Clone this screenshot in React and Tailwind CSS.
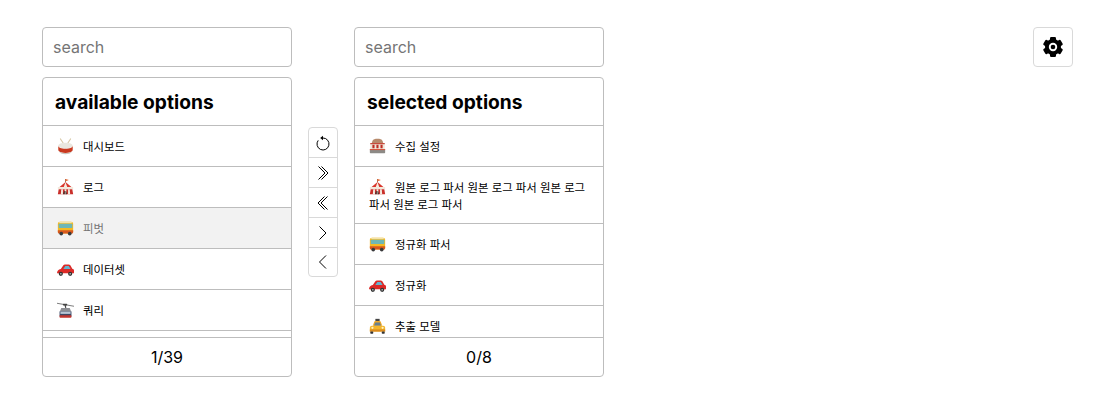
const Drum = () => (
  <>
    <path d="M4 1l4 6M16 1l-4 6" stroke="#d8c9a8" strokeWidth="1.2" strokeLinecap="round" />
    <ellipse cx="10" cy="9" rx="8.500" ry="3.500" fill="#e9e7df" />
    <path d="M1.500 9c0 2 3.500 3.500 8.500 3.500S18.500 11 18.500 9v4.500c0 .8-.2 1.400-.8 2-1.400 1.400-4.200 2-7.700 2s-6.300-.6-7.700-2c-.6-.6-.8-1.200-.8-2z" fill="#c9391f" />
    <path d="M2.500 15.500c1.500 1.400 4 2.200 7.500 2.200s6-.8 7.500-2.200c-.5 2-3.500 3.500-7.500 3.500s-7-1.500-7.500-3.500z" fill="#c9c5bd" />
  </>
);

const Tent = () => (
  <>
    <path d="M10 0v4" stroke="#8a5a3a" strokeWidth="1" />
    <path d="M10 0l4 1.300-4 1.300z" fill="#e8632c" />
    <path d="M10 3.500L3 9.500h14z" fill="#d9362b" />
    <path d="M10 3.500L8 9.500h4z" fill="#f4ece0" />
    <rect x="1" y="9.500" width="18" height="2.500" fill="#f2e7da" />
    <path d="M2 12h16l1 6H1z" fill="#c92f2a" />
    <path d="M5 12h2v6H4.500zM13 12h2l.5 6H13zM9 12h2v6H9z" fill="#f4ece0" />
    <path d="M7.300 18l1-4h.7v4zM11.700 18l-1-4H10v4z" fill="#2b2220" />
  </>
);

const Bus = () => (
  <>
    <rect x="1" y="2" width="18" height="14" rx="2.500" fill="#f5b921" />
    <rect x="2.500" y="2" width="15" height="1.800" rx=".8" fill="#f4e3a8" />
    <rect x="2" y="4.300" width="16" height="5" rx=".6" fill="#6fb7b5" />
    <path d="M1 12h18v2.300c0 1-.7 1.700-1.700 1.700H2.700c-1 0-1.700-.7-1.700-1.700z" fill="#d8581f" />
    <circle cx="5" cy="16" r="2.200" fill="#3a3a3c" />
    <circle cx="15" cy="16" r="2.200" fill="#3a3a3c" />
  </>
);

const Car = () => (
  <>
    <path d="M0 14.500c0-3 1.500-4.500 4.500-5.200l3-4.300c.5-.6 1-.9 1.800-.9h4.400c.9 0 1.500.4 2 1l2.300 3.900c1.500.5 2.500 1.500 2.500 3v2.500z" fill="#dc2a27" />
    <path d="M7.500 9.500l2.300-3.700h4l2.200 3.700z" fill="#63b4cf" />
    <circle cx="4.500" cy="15" r="2.500" fill="#333" />
    <circle cx="15.500" cy="15" r="2.500" fill="#333" />
    <circle cx="4.500" cy="15" r="1" fill="#bbb" />
    <circle cx="15.500" cy="15" r="1" fill="#bbb" />
  </>
);

const Tram = () => (
  <>
    <path d="M0 1.500L20 5" stroke="#555" strokeWidth=".9" />
    <path d="M9.500 3l.8 4" stroke="#444" strokeWidth="1.500" />
    <rect x="7" y="2" width="5" height="2" rx=".5" fill="#444" />
    <path d="M5 7h10l1.500 4H3.500z" fill="#8b8d92" />
    <rect x="3" y="11" width="14" height="6" fill="#3c4a66" />
    <rect x="4" y="11.500" width="12" height="2.500" fill="#b8c6d4" />
    <rect x="3" y="15.500" width="14" height="3" rx=".8" fill="#c1362f" />
  </>
);

const Slot = () => (
  <>
    <path d="M4 3.500C5 1.500 7 1 10 1s5 .5 6 2.500l.7 2.500H3.300z" fill="#b78a6c" />
    <rect x="1.500" y="6" width="17" height="7" fill="#efe6d8" />
    <rect x="1.500" y="6" width="17" height="1.300" fill="#c23a2c" />
    <path d="M4 8h2.500v4H4zM8.700 8h2.500v4H8.700zM13.500 8H16v4h-2.500z" fill="#bd2f26" />
    <rect x="1" y="13" width="18" height="5" rx=".8" fill="#8d8a86" />
    <rect x="1" y="13" width="18" height="1.200" fill="#d8523a" />
  </>
);

const Taxi = () => (
  <>
    <rect x="7.500" y="1" width="5" height="2.500" fill="#444" />
    <path d="M4.500 9l1.500-4.200c.2-.7.800-1.200 1.600-1.200h4.800c.8 0 1.400.5 1.600 1.200L15.500 9z" fill="#f1a826" />
    <path d="M6 9l1.200-3.800h5.600L14 9z" fill="#68808f" />
    <path d="M1 11.500C1 10 2 9 3.500 9h13c1.500 0 2.500 1 2.500 2.500V16H1z" fill="#f3b52c" />
    <rect x="1" y="13.500" width="18" height="2.500" fill="#d98a1e" />
    <rect x="1.500" y="16" width="3.500" height="2.500" rx=".8" fill="#333" />
    <rect x="15" y="16" width="3.500" height="2.500" rx=".8" fill="#333" />
    <circle cx="4" cy="11.500" r="1.300" fill="#fff3c4" />
    <circle cx="16" cy="11.500" r="1.300" fill="#fff3c4" />
  </>
);

const available = [
  { icon: Drum, label: "대시보드" },
  { icon: Tent, label: "로그" },
  { icon: Bus, label: "피벗", active: true },
  { icon: Car, label: "데이터셋" },
  { icon: Tram, label: "쿼리" },
];

const selected = [
  { icon: Slot, label: "수집 설정" },
  { icon: Tent, label: "원본 로그 파서 원본 로그 파서 원본 로그 파서 원본 로그 파서" },
  { icon: Bus, label: "정규화 파서" },
  { icon: Car, label: "정규화" },
  { icon: Taxi, label: "추출 모델" },
];

function Row({ item }) {
  const Icon = item.icon;
  return (
    <li className={`border-b border-[#bdbdbd] px-[14px] py-[10px] text-[11.4px] leading-[16px] ${item.active ? "bg-[#f2f2f2] text-[#757575]" : "text-black"}`}>
      <span className="mr-[10px] inline-flex h-[20px] w-[16px] items-center justify-center align-[-4px]">
        <svg viewBox="0 0 20 20" className="h-[17px] w-[17px] shrink-0">
          <Icon />
        </svg>
      </span>
      {item.label}
    </li>
  );
}

function Column({ title, items, count }) {
  return (
    <div className="flex w-[250px] flex-col gap-[10px]">
      <input
        type="text"
        placeholder="search"
        className="h-[40px] rounded border border-[#bdbdbd] px-[10px] text-[16px] outline-none placeholder:text-[#757575]"
      />
      <div className="flex h-[300px] flex-col rounded border border-[#bdbdbd]">
        <h2 className="h-[48px] shrink-0 border-b border-[#bdbdbd] px-[12px] text-[19.2px] leading-[48px] font-bold">{title}</h2>
        <ul className="min-h-0 flex-1 overflow-hidden">
          {items.map((item) => (
            <Row key={item.label} item={item} />
          ))}
        </ul>
        <div className="h-[39px] shrink-0 border-t border-[#bdbdbd] text-center text-[16px] leading-[38px]">{count}</div>
      </div>
    </div>
  );
}

const transferPaths = [
  ["M10 5a6 6 0 1 1-4.800 2.400"],
  ["M5.500 3.500L12 10l-6.500 6.500", "M8.500 3.500L15 10l-6.500 6.500"],
  ["M11.500 3.500L5 10l6.500 6.500", "M14.500 3.500L8 10l6.500 6.500"],
  ["M6.500 3.500L13 10l-6.500 6.500"],
  ["M13 3.500L6.500 10l6.500 6.500"],
];

export default function App() {
  return (
    <div className="flex h-[418px] items-start bg-white pt-[27px] pr-[36px] pl-[42px] font-['Inter','Noto_Sans_CJK_KR',sans-serif] text-black">
      <Column title="available options" items={available} count="1/39" />
      <div className="mx-[16px] mt-[100px] flex h-[150px] w-[30px] flex-col overflow-hidden rounded border border-[#d9d9d9]">
        {transferPaths.map((paths, i) => (
          <button key={i} className="flex h-[30px] shrink-0 items-center justify-center border-b border-[#d9d9d9] last:h-[28px] last:border-b-0">
            <svg viewBox="0 0 20 20" className="h-[20px] w-[20px]" fill="none" stroke="black" strokeWidth="1">
              {paths.map((d) => (
                <path key={d} d={d} />
              ))}
              {i === 0 && <path d="M10 2.800L7.200 5 10 7.200z" fill="black" stroke="none" />}
            </svg>
          </button>
        ))}
      </div>
      <Column title="selected options" items={selected} count="0/8" />
      <button className="ml-auto flex h-[40px] w-[40px] items-center justify-center rounded border border-[#d9d9d9]">
        <svg viewBox="0 0 24 24" className="h-[24px] w-[24px]">
          <circle cx="12" cy="12" r="8" fill="black" />
          {[0, 60, 120, 180, 240, 300].map((deg) => (
            <rect key={deg} x="9" y="2" width="6" height="6" rx="1.200" fill="black" transform={`rotate(${deg} 12 12)`} />
          ))}
          <circle cx="12" cy="12" r="4.200" fill="white" />
          <circle cx="12" cy="12" r="2.300" fill="black" />
        </svg>
      </button>
    </div>
  );
}
